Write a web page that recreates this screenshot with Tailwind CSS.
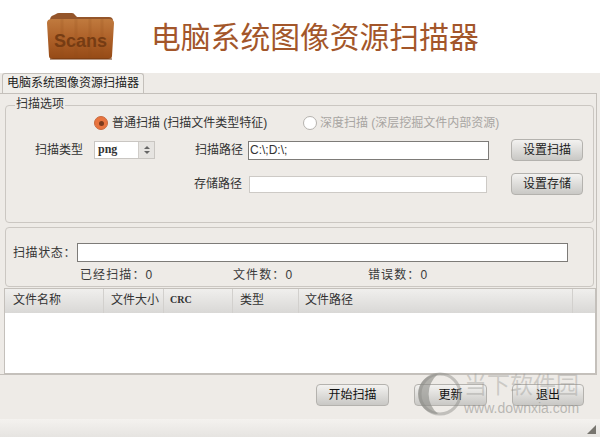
<!DOCTYPE html>
<html lang="zh-CN">
<head>
<meta charset="UTF-8">
<title>电脑系统图像资源扫描器</title>
<script src="https://cdn.jsdelivr.net/npm/@tailwindcss/browser@4"></script>
</head>
<body class="relative w-[600px] h-[437px] overflow-hidden bg-[#eeebe7] text-[12px] leading-[16px] text-[#333] font-['Liberation_Sans','Noto_Sans_CJK_SC',sans-serif]">
  <!-- Header -->
  <header class="h-[73px] bg-white flex items-start">
    <svg class="ml-[46px] mt-[12px] w-[70px] h-[50px] shrink-0" viewBox="0 0 70 50">
      <defs>
        <linearGradient id="wood" x1="0" y1="0" x2="0" y2="1">
          <stop offset="0" stop-color="#c07a3e"/>
          <stop offset="0.5" stop-color="#ad6028"/>
          <stop offset="1" stop-color="#954a16"/>
        </linearGradient>
      </defs>
      <path d="M4 8 Q4 4 8 3 L10 2 Q11 1 13 1 L26 1 Q28 1 29 3 L31 5 L63 5 Q67 5 67 9 L67 11 L4 11 Z" fill="#94552a"/>
      <path d="M1 11 Q1 7 6 7 L63 7 Q68 7 68 11 L66 44 Q66 47 62 47 L7 47 Q3 47 3 44 Z" fill="url(#wood)"/>
      <path d="M16 7V47M30 7V47M44 7V47M56 7V47" stroke="#8f4d1c" stroke-opacity="0.18" stroke-width="3"/>
      <path d="M4 47 L66 47" stroke="#6e3610" stroke-width="1"/>
      <text x="34.5" y="35" text-anchor="middle" font-family="Liberation Sans" font-weight="700" font-size="18" fill="#763c13">Scans</text>
    </svg>
    <h1 class="ml-[35px] mt-[19px] text-[29.8px] leading-[38px] font-normal text-[#a3562a] whitespace-nowrap">电脑系统图像资源扫描器</h1>
  </header>

  <!-- Tab -->
  <div class="ml-[2px] w-[142px] h-[20px] bg-[#f0eeea] border border-b-0 border-[#c4c0bb] rounded-t-[3px] pl-[4px] text-[#222] leading-[19px] whitespace-nowrap">电脑系统图像资源扫描器</div>

  <!-- Tab pane -->
  <main class="mr-[3px] h-[282px] border-t border-r border-b border-[#c4c0bb] bg-[#eeebe7] px-[5px] pt-[11px]">
    <!-- Scan options group -->
    <section class="relative w-[589px] h-[118px] border border-[#cbc7c2] rounded-[4px] pt-[9px]">
      <span class="absolute left-[9px] top-[-10px] px-[1px] bg-[#eeebe7] text-[#333]">扫描选项</span>
      <div class="flex items-center h-[16px] pl-[88px]">
        <span class="w-[14px] h-[14px] rounded-full bg-[#e8743f] border border-[#c9693d] flex items-center justify-center">
          <span class="w-[5px] h-[5px] rounded-full bg-[#7a3a1c]"></span>
        </span>
        <span class="ml-[4px] w-[191px] whitespace-nowrap text-[#333]">普通扫描 (扫描文件类型特征)</span>
        <span class="w-[14px] h-[14px] rounded-full bg-white border border-[#b5b2ae]"></span>
        <span class="ml-[3px] whitespace-nowrap text-[#a8a5a2]">深度扫描 (深层挖掘文件内部资源)</span>
      </div>
      <div class="flex items-center h-[22px] mt-[8px]">
        <span class="ml-[29px] w-[59px]">扫描类型</span>
        <div class="flex w-[61px] h-[18px] bg-white border border-[#c9c6c2]">
          <span class="flex-1 pl-[3px] leading-[15px] font-['Liberation_Serif',serif] font-bold text-[#333]">png</span>
          <span class="w-[16px] bg-[#e6e4e1] border-l border-[#d0cdc9] flex flex-col items-center justify-center gap-[2px]">
            <span class="w-0 h-0 border-x-[3px] border-x-transparent border-b-[3px] border-b-[#666]"></span>
            <span class="w-0 h-0 border-x-[3px] border-x-transparent border-t-[3px] border-t-[#666]"></span>
          </span>
        </div>
        <span class="ml-[40px] w-[53px]">扫描路径</span>
        <div class="w-[241px] h-[19px] bg-white border border-[#7d7b78] pl-[1px] leading-[17px] text-[#333]">C:\;D:\;</div>
        <button class="ml-[22px] w-[72px] h-[22px] rounded-[4px] border border-[#b4b2ae] bg-gradient-to-b from-[#f3f2f0] to-[#c9c8c5] text-[#222]">设置扫描</button>
      </div>
      <div class="flex items-center h-[22px] mt-[12px]">
        <span class="ml-[188px] w-[55px]">存储路径</span>
        <div class="w-[238px] h-[17px] bg-white border border-[#cdcac6]"></div>
        <button class="ml-[24px] w-[72px] h-[22px] rounded-[4px] border border-[#b4b2ae] bg-gradient-to-b from-[#f3f2f0] to-[#c9c8c5] text-[#222]">设置存储</button>
      </div>
    </section>

    <!-- Status group -->
    <section class="w-[589px] h-[60px] mt-[4px] border border-[#cbc7c2] rounded-[4px] pt-[15px]">
      <div class="flex items-center h-[19px]">
        <span class="ml-[7px] w-[64px] tracking-[0.6px] whitespace-nowrap">扫描状态：</span>
        <div class="w-[491px] h-[19px] bg-white border border-[#7d7b78]"></div>
      </div>
      <div class="flex items-center h-[16px] mt-[5px] tracking-[1.1px] text-[#3a3a3a] whitespace-nowrap">
        <span class="ml-[74px] w-[153px]">已经扫描：0</span>
        <span class="w-[135px]">文件数：0</span>
        <span>错误数：0</span>
      </div>
    </section>

    <!-- File table -->
    <section class="w-[592px] h-[86px] mt-[1px] -ml-[1px] bg-white border border-[#c4c0bb]">
      <div class="flex h-[24px] items-center bg-gradient-to-b from-[#f0efed] to-[#d9d8d6] text-[#333] whitespace-nowrap">
        <span class="w-[99px] h-full pl-[8px] leading-[22px] border-r border-[#d2d0cd]">文件名称</span>
        <span class="w-[60px] h-full pl-[7px] leading-[22px] border-r border-[#d2d0cd]">文件大小</span>
        <span class="w-[69px] h-full pl-[6px] leading-[22px] border-r border-[#d2d0cd] font-['Liberation_Serif',serif] font-bold text-[10px]">CRC</span>
        <span class="w-[66px] h-full pl-[7px] leading-[22px] border-r border-[#d2d0cd]">类型</span>
        <span class="w-[274px] h-full pl-[6px] leading-[22px] border-r border-[#d2d0cd]">文件路径</span>
      </div>
    </section>
  </main>

  <!-- Bottom buttons -->
  <div class="flex mt-[9px] h-[22px] pl-[316px] gap-[25px] text-[#111]">
    <button class="w-[73px] h-[22px] rounded-[4px] border border-[#b4b2ae] bg-gradient-to-b from-[#f3f2f0] to-[#c9c8c5]">开始扫描</button>
    <button class="w-[73px] h-[22px] rounded-[4px] border border-[#b4b2ae] bg-gradient-to-b from-[#f3f2f0] to-[#c9c8c5]">更新</button>
    <button class="w-[72px] h-[22px] rounded-[4px] border border-[#b4b2ae] bg-gradient-to-b from-[#f3f2f0] to-[#c9c8c5]">退出</button>
  </div>

  <!-- Status bar -->
  <footer class="absolute left-0 right-0 bottom-0 h-[18px] bg-gradient-to-b from-[#f4f2ef] to-[#e6e4e1]">
    <span class="absolute right-[4px] bottom-[3px] w-0 h-0 border-l-[9px] border-l-transparent border-b-[9px] border-b-[#77756f]"></span>
  </footer>

  <!-- Watermark -->
  <div class="absolute left-[414px] top-[372px] pointer-events-none">
    <svg class="w-[52px] h-[46px]" viewBox="0 0 52 46">
      <circle cx="26" cy="22" r="20" fill="none" stroke="#8a8a86" stroke-opacity="0.45" stroke-width="3"/>
      <path d="M24 2 A20 20 0 0 0 24 42 A26 26 0 0 1 24 2 Z" fill="#8a8a86" fill-opacity="0.6"/>
    </svg>
  </div>
  <span class="absolute left-[464px] top-[371px] text-[23px] leading-[28px] text-[#8a8a86]/35 whitespace-nowrap pointer-events-none">当下软件园</span>
  <span class="absolute left-[464px] top-[400px] text-[14px] leading-[16px] text-[#8a8a86]/55 whitespace-nowrap pointer-events-none">www.downxia.com</span>
</body>
</html>
